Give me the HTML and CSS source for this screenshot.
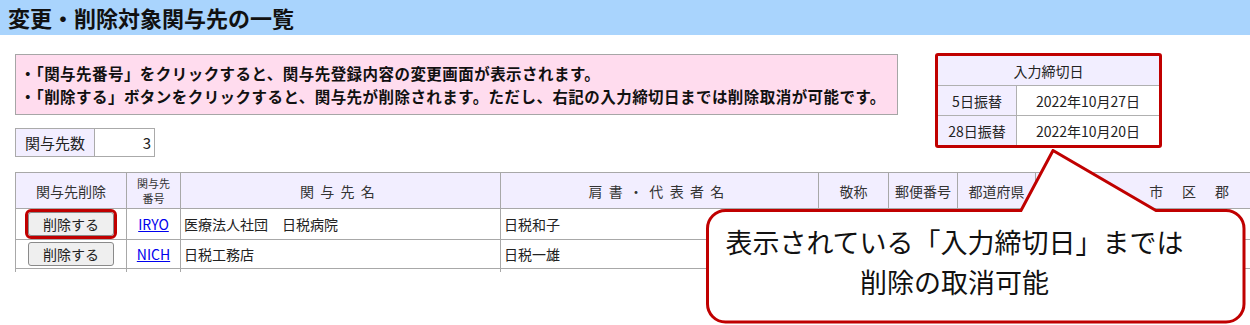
FILE: index.html
```html
<!DOCTYPE html>
<html lang="ja">

<head>
    <meta charset="UTF-8">
    <meta name="viewport" content="width=device-width, initial-scale=1.0">
    <title>変更・削除対象関与先の一覧</title>
    <link rel="stylesheet" href="styles.css">
</head>

<body>
    <header class="page-title">変更・削除対象関与先の一覧</header>

    <div class="top">
        <div class="top-left">
            <div class="notice">
                <p>・「関与先番号」をクリックすると、関与先登録内容の変更画面が表示されます。</p>
                <p>・「削除する」ボタンをクリックすると、関与先が削除されます。ただし、右記の入力締切日までは削除取消が可能です。</p>
            </div>
            <table class="count">
                <tr>
                    <th>関与先数</th>
                    <td>3</td>
                </tr>
            </table>
        </div>

        <div class="deadline-box">
            <table class="deadline">
                <tr>
                    <th colspan="2" class="deadline-head">入力締切日</th>
                </tr>
                <tr>
                    <th>5日振替</th>
                    <td>2022年10月27日</td>
                </tr>
                <tr>
                    <th>28日振替</th>
                    <td>2022年10月20日</td>
                </tr>
            </table>
        </div>
    </div>

    <div class="list-wrap">
        <table class="list">
            <colgroup>
                <col class="c-del">
                <col class="c-no">
                <col class="c-name">
                <col class="c-rep">
                <col class="c-title">
                <col class="c-zip">
                <col class="c-pref">
                <col class="c-city">
            </colgroup>
            <tr class="list-head">
                <th>関与先削除</th>
                <th class="small">関与先<br>番号</th>
                <th class="spaced">関与先名</th>
                <th class="spaced">肩書・代表者名</th>
                <th>敬称</th>
                <th>郵便番号</th>
                <th>都道府県</th>
                <th class="spaced wide">市区郡</th>
            </tr>
            <tr class="row-a">
                <td class="center"><button class="del-button marked">削除する</button></td>
                <td class="center"><a href="#">IRYO</a></td>
                <td>医療法人社団　日税病院</td>
                <td>日税和子</td>
                <td></td>
                <td></td>
                <td></td>
                <td></td>
            </tr>
            <tr class="row-b">
                <td class="center"><button class="del-button">削除する</button></td>
                <td class="center"><a href="#">NICH</a></td>
                <td>日税工務店</td>
                <td>日税一雄</td>
                <td></td>
                <td></td>
                <td></td>
                <td></td>
            </tr>
            <tr class="row-b">
                <td></td>
                <td></td>
                <td></td>
                <td></td>
                <td></td>
                <td></td>
                <td></td>
                <td></td>
            </tr>
        </table>
    </div>

    <div class="callout">
        <svg class="callout-shape" width="541" height="175" viewBox="0 0 541 175">
            <path d="M 19.5 61.5 H 315 L 347 1.5 L 450 61.5 H 520 A 18 18 0 0 1 538 79.5 V 155 A 18 18 0 0 1 520 173 H 19.5 A 18 18 0 0 1 1.5 155 V 79.5 A 18 18 0 0 1 19.5 61.5 Z"
                fill="#fff" stroke="#c00000" stroke-width="3" />
        </svg>
        <div class="callout-text">
            <p>表示されている「入力締切日」までは</p>
            <p>削除の取消可能</p>
        </div>
    </div>
</body>

</html>
```

FILE: styles.css
```css
body {
    margin: 0;
    font-family: "Noto Sans CJK JP", sans-serif;
    color: #222;
    background-color: #fff;
    overflow: hidden;
}

p {
    margin: 0;
}

.page-title {
    height: 35px;
    line-height: 35px;
    padding-left: 8px;
    background-color: #a9d4fd;
    font-size: 22px;
    font-weight: bold;
    color: #111;
}

.top {
    display: flex;
    align-items: flex-start;
    gap: 37px;
    padding-left: 15px;
}

.top-left {
    margin-top: 19px;
}

.notice {
    box-sizing: border-box;
    width: 883px;
    height: 61px;
    padding: 7px 0 0 4px;
    background-color: #ffdcee;
    border: 1px solid #a6a6a6;
    font-size: 15.5px;
    font-weight: bold;
    line-height: 23px;
    letter-spacing: 0.45px;
    color: #111;
}

table {
    border-collapse: collapse;
}

.count {
    margin-top: 13px;
    width: 140px;
    height: 29px;
    font-size: 15px;
}

.count th,
.count td {
    border: 1px solid #aaa;
    font-weight: normal;
}

.count th {
    width: 76px;
    background-color: #f2eeff;
}

.count td {
    text-align: right;
    padding-right: 3px;
}

.deadline-box {
    margin-top: 18px;
    width: 221px;
    border: 3px solid #c00000;
    border-radius: 3px;
}

.deadline {
    width: 100%;
    font-size: 14px;
}

.deadline th,
.deadline td {
    height: 29px;
    padding: 0;
    font-weight: normal;
    text-align: center;
    border-top: 1px solid #b0b0b0;
}

.deadline th {
    width: 78px;
    background-color: #f2eeff;
}

.deadline td {
    border-left: 1px solid #b0b0b0;
}

.deadline .deadline-head {
    border-top: none;
}

.list-wrap {
    margin-top: 15px;
    padding-left: 15px;
    height: 100px;
    overflow: hidden;
}

.list {
    table-layout: fixed;
    width: 1346px;
    font-size: 14px;
}

.c-del { width: 111px; }
.c-no { width: 54px; }
.c-name { width: 320px; }
.c-rep { width: 318px; }
.c-title { width: 70px; }
.c-zip { width: 69px; }
.c-pref { width: 78px; }
.c-city { width: 326px; }

.list th,
.list td {
    border: 1px solid #a8a8a8;
    padding: 0 3px;
    white-space: nowrap;
    overflow: hidden;
}

.list th {
    height: 35px;
    background-color: #f2eeff;
    font-weight: normal;
    color: #333;
}

.list th.small {
    padding: 0;
    font-size: 11px;
    line-height: 15px;
}

.list th.spaced {
    letter-spacing: 0.45em;
}

.list th.wide {
    letter-spacing: 1.35em;
}

.row-a td {
    height: 30px;
}

.row-b td {
    height: 28px;
}

.center {
    text-align: center;
}

.list a {
    color: #0000ee;
    text-decoration: underline;
}

.del-button {
    width: 86px;
    height: 24px;
    padding: 0;
    font-family: "Noto Sans CJK JP", sans-serif;
    font-size: 14px;
    color: #222;
    background-color: #efefef;
    border: 1px solid #8a8a8a;
    border-radius: 3px;
}

.del-button.marked {
    outline: 3px solid #c00000;
    outline-offset: 0;
    border-radius: 3px;
}

.callout {
    position: absolute;
    left: 706px;
    top: 149px;
    width: 541px;
    height: 175px;
}

.callout-shape {
    position: absolute;
    left: 0;
    top: 0;
}

.callout-text {
    position: relative;
    padding: 73px 44px 0 0;
    text-align: center;
    font-size: 27px;
    line-height: 40px;
    color: #111;
}
```
